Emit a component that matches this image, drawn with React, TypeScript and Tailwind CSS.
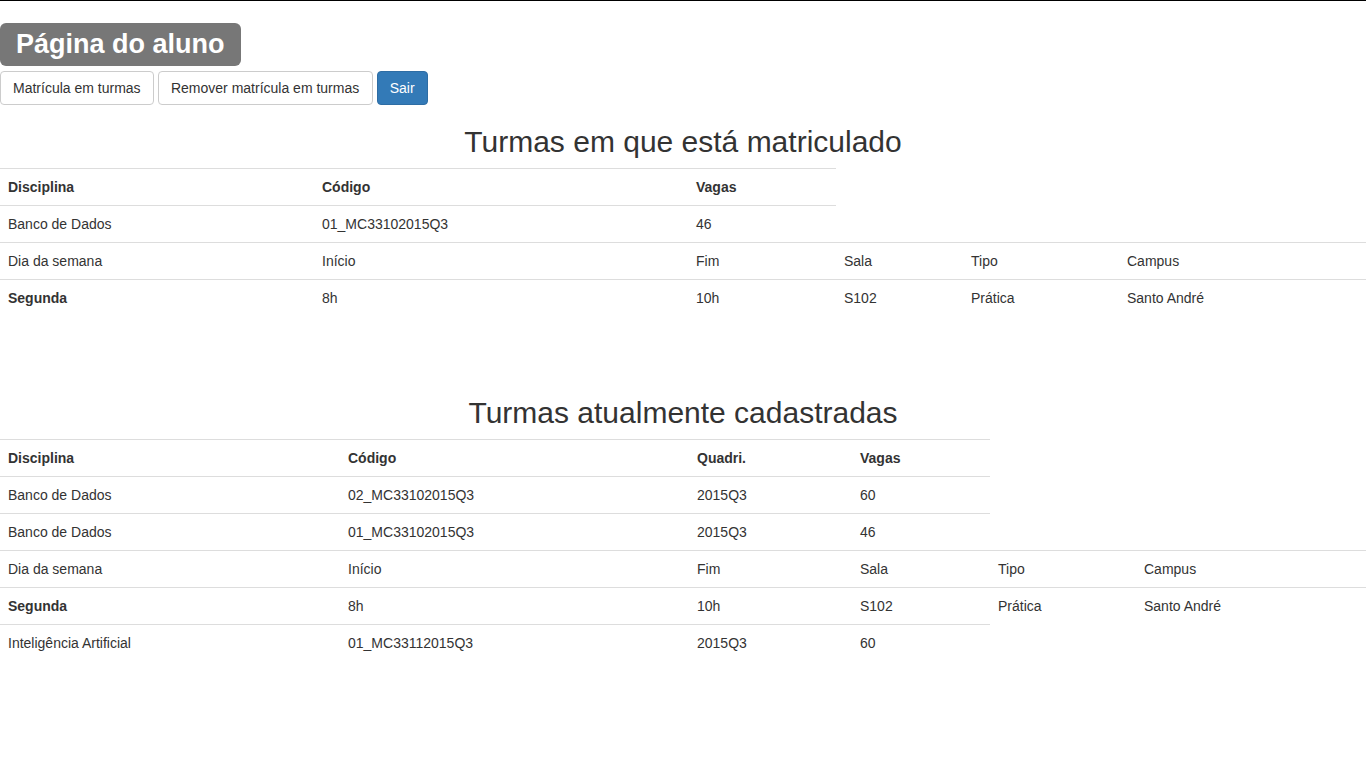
const font = { fontFamily: '"Liberation Sans", Arial, sans-serif' };

function Row({
  cells,
  widths,
  full,
  bold,
}: {
  cells: string[];
  widths: number[];
  full?: boolean;
  bold?: boolean;
}) {
  return (
    <div
      className={`flex border-t border-[#dddddd] ${full ? "w-full" : ""}`}
      style={full ? undefined : { width: widths.reduce((a, b) => a + b, 0) }}
    >
      {cells.map((c, i) => (
        <div
          key={i}
          className={`shrink-0 p-2 text-sm leading-5 ${bold ? "font-bold" : ""}`}
          style={{ width: widths[i] }}
        >
          {c}
        </div>
      ))}
    </div>
  );
}

function ScheduleRows({ widths }: { widths: number[] }) {
  return (
    <>
      <Row full widths={widths} cells={["Dia da semana", "Início", "Fim", "Sala", "Tipo", "Campus"]} />
      <div className="flex w-full border-t border-[#dddddd]">
        {["Segunda", "8h", "10h", "S102", "Prática", "Santo André"].map((c, i) => (
          <div
            key={i}
            className={`shrink-0 p-2 text-sm leading-5 ${i === 0 ? "font-bold" : ""}`}
            style={{ width: widths[i] }}
          >
            {c}
          </div>
        ))}
      </div>
    </>
  );
}

export default function App() {
  const t1 = [314, 374, 148];
  const s1 = [314, 374, 148, 127, 156, 247];
  const t2 = [340, 349, 163, 138];
  const s2 = [340, 349, 163, 138, 146, 230];

  return (
    <div className="min-h-[768px] border-t border-black bg-white text-[#333333]" style={font}>
      <div className="pt-[22px]">
        <span className="inline-flex h-[43px] items-center rounded-[6px] bg-[#777777] px-[16px] text-[27px] font-bold leading-none text-white">
          Página do aluno
        </span>
      </div>

      <div className="mt-[5px] flex gap-[4px]">
        <button className="h-[34px] rounded-[4px] border border-[#cccccc] bg-white px-3 text-sm text-[#333333]">
          Matrícula em turmas
        </button>
        <button className="h-[34px] w-[215px] rounded-[4px] border border-[#cccccc] bg-white px-3 text-sm text-[#333333]">
          Remover matrícula em turmas
        </button>
        <button className="h-[34px] w-[51px] rounded-[4px] border border-[#2e6da4] bg-[#337ab7] text-sm text-white">
          Sair
        </button>
      </div>

      <h2 className="mt-5 mb-[10px] text-center text-[30px] font-normal leading-[33px]">
        Turmas em que está matriculado
      </h2>
      <div>
        <Row bold widths={t1} cells={["Disciplina", "Código", "Vagas"]} />
        <Row widths={t1} cells={["Banco de Dados", "01_MC33102015Q3", "46"]} />
        <ScheduleRows widths={s1} />
      </div>

      <h2 className="mt-[80px] mb-[10px] text-center text-[30px] font-normal leading-[33px]">
        Turmas atualmente cadastradas
      </h2>
      <div>
        <Row bold widths={t2} cells={["Disciplina", "Código", "Quadri.", "Vagas"]} />
        <Row widths={t2} cells={["Banco de Dados", "02_MC33102015Q3", "2015Q3", "60"]} />
        <Row widths={t2} cells={["Banco de Dados", "01_MC33102015Q3", "2015Q3", "46"]} />
        <ScheduleRows widths={s2} />
        <Row widths={t2} cells={["Inteligência Artificial", "01_MC33112015Q3", "2015Q3", "60"]} />
      </div>
    </div>
  );
}
